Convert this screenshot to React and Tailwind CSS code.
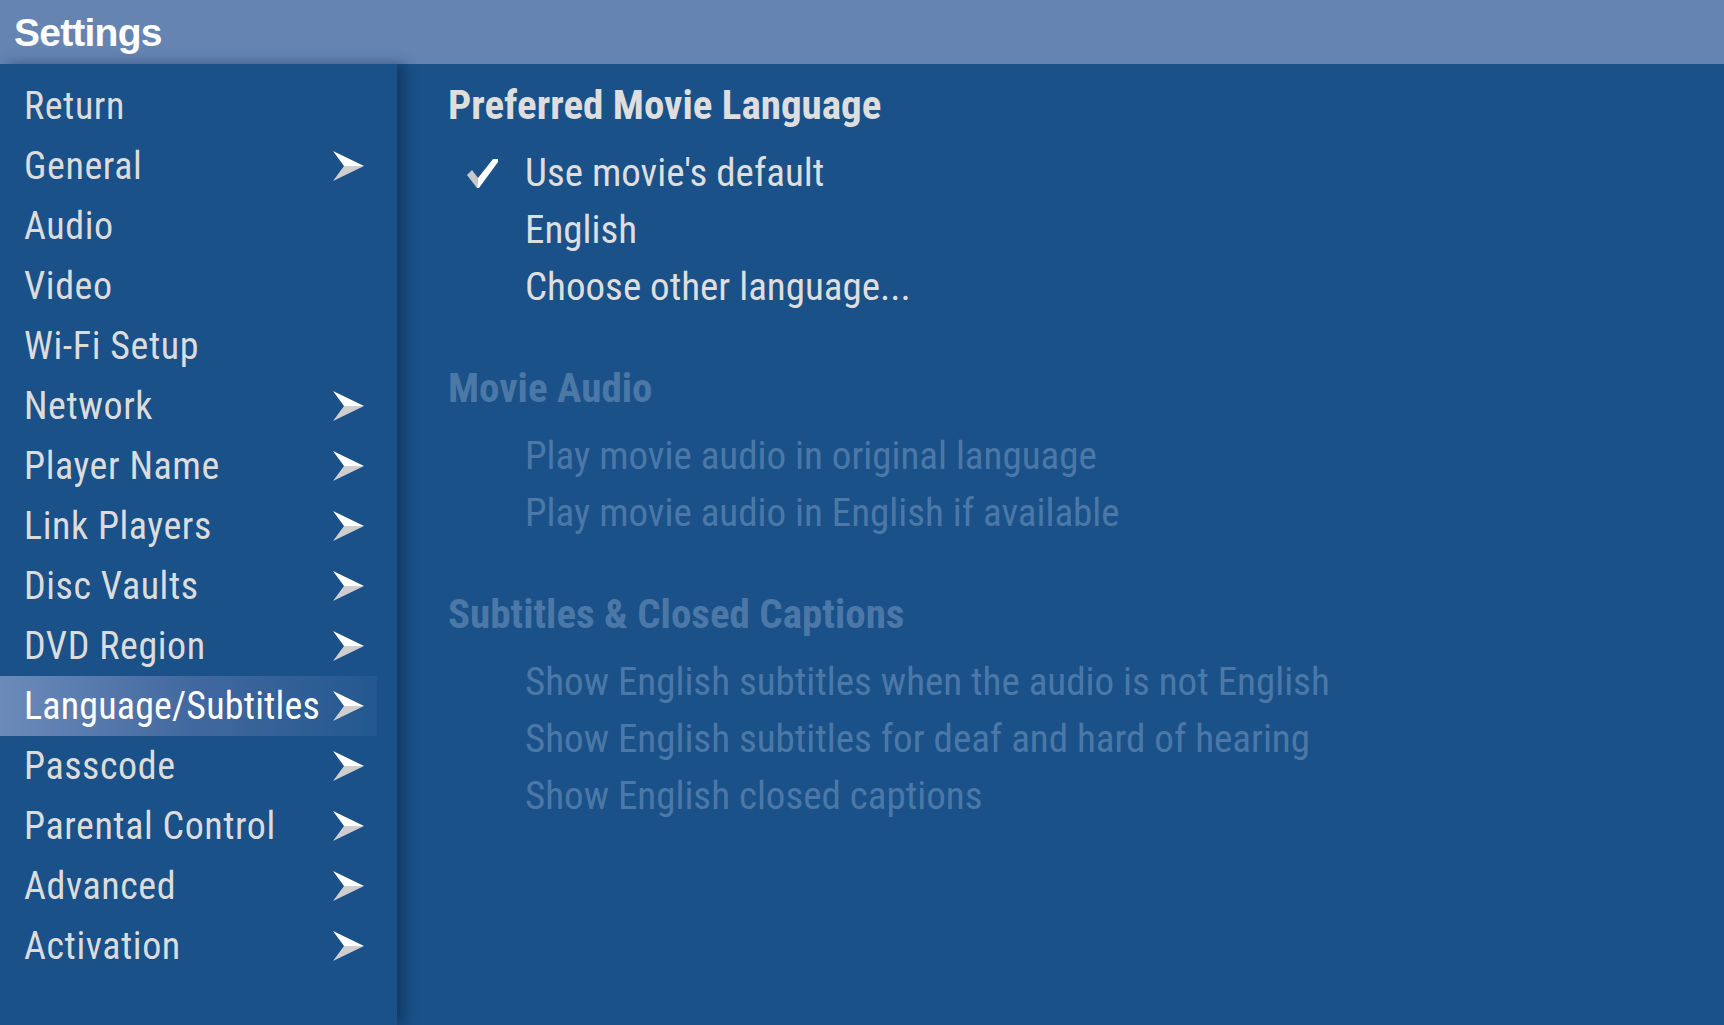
import React from 'react';

// menu entries, `sub` => has a submenu arrow
const MENU = [
  { label: 'Return' },
  { label: 'General', sub: true },
  { label: 'Audio' },
  { label: 'Video' },
  { label: 'Wi-Fi Setup' },
  { label: 'Network', sub: true },
  { label: 'Player Name', sub: true },
  { label: 'Link Players', sub: true },
  { label: 'Disc Vaults', sub: true },
  { label: 'DVD Region', sub: true },
  { label: 'Language/Subtitles', sub: true, active: true },
  { label: 'Passcode', sub: true },
  { label: 'Parental Control', sub: true },
  { label: 'Advanced', sub: true },
  { label: 'Activation', sub: true },
];

const SECTIONS = [
  {
    title: 'Preferred Movie Language',
    enabled: true,
    options: [
      { label: "Use movie's default", checked: true },
      { label: 'English' },
      { label: 'Choose other language...' },
    ],
  },
  {
    title: 'Movie Audio',
    options: [
      { label: 'Play movie audio in original language' },
      { label: 'Play movie audio in English if available' },
    ],
  },
  {
    title: 'Subtitles & Closed Captions',
    options: [
      { label: 'Show English subtitles when the audio is not English' },
      { label: 'Show English subtitles for deaf and hard of hearing' },
      { label: 'Show English closed captions' },
    ],
  },
];

const condensed = "font-['Roboto_Condensed','Liberation_Sans_Narrow','DejaVu_Sans_Condensed',Roboto,sans-serif]";

function Arrow() {
  return (
    <svg width="31" height="30" viewBox="0 0 31 30" className="shrink-0">
      <polygon points="0,0 31,15 11,15" fill="#ffffff" />
      <polygon points="11,15 31,15 0,30" fill="#cfcfcf" />
    </svg>
  );
}

function Check() {
  return (
    <svg width="31" height="29" viewBox="0 0 31 29" className="shrink-0">
      <polygon points="0,16 5,11 11,19 10,29" fill="#c9c9c9" />
      <polygon points="11,19 26,0 31,0 31,3 12,29 10,29" fill="#ffffff" />
    </svg>
  );
}

function MenuRow({ item }) {
  return (
    <div
      className={
        'h-[60px] w-[377px] flex items-center justify-between pl-[24px] pr-[13px] ' +
        (item.active ? 'bg-gradient-to-r from-[#6c8bba] via-[#42699f] to-[#22588f]' : '')
      }
    >
      <span
        className={
          condensed +
          ' whitespace-nowrap ' +
          (item.active
            ? 'text-[38px] tracking-[0.005em] leading-[60px] text-white'
            : 'text-[38px] tracking-[0.015em] leading-[60px] text-[#dcdcdc]')
        }
      >
        {item.label}
      </span>
      {item.sub && <Arrow />}
    </div>
  );
}

function Section({ section, first }) {
  const tone = section.enabled ? 'text-[#dedede]' : 'text-[#4c78a7]';
  return (
    <div className={first ? '' : 'mt-[44px]'}>
      <div className={condensed + ' font-bold text-[41px] leading-[57px] mb-[11px] whitespace-nowrap ' + tone}>
        {section.title}
      </div>
      {section.options.map((opt) => (
        <div key={opt.label} className="h-[57px] flex items-center">
          <div className="w-[77px] pl-[19px] flex items-center">{opt.checked && <Check />}</div>
          <span className={condensed + ' text-[39px] leading-[57px] whitespace-nowrap ' + tone}>{opt.label}</span>
        </div>
      ))}
    </div>
  );
}

export default function App() {
  return (
    <div className="w-[1724px] h-[1025px] flex flex-col bg-[#1a5189] overflow-hidden">
      {/* TITLE BAR */}
      <div className="h-[64px] shrink-0 bg-[#6584b2] flex items-center px-[14px]">
        <h1 className="font-['Liberation_Sans',Arial,sans-serif] font-bold text-[39px] tracking-[-0.02em] text-white leading-none">
          Settings
        </h1>
      </div>

      <div className="flex-1 flex min-h-0">
        {/* SIDEBAR */}
        <nav className="w-[397px] shrink-0 pt-[12px] bg-[#1a5189] relative z-10 shadow-[8px_0_12px_rgba(8,30,60,0.45)]">
          {MENU.map((item) => (
            <MenuRow key={item.label} item={item} />
          ))}
        </nav>

        {/* CONTENT */}
        <main className="flex-1 pt-[13px] pl-[51px]">
          {SECTIONS.map((s, i) => (
            <Section key={s.title} section={s} first={i === 0} />
          ))}
        </main>
      </div>
    </div>
  );
}
